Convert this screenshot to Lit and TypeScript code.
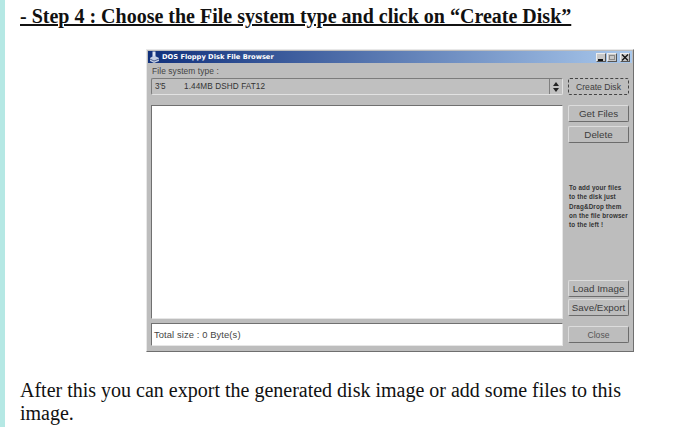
import { LitElement, html, css } from "lit";
import { customElement } from "lit/decorators.js";

@customElement("app-root")
export class AppRoot extends LitElement {
  static styles = css`
    :host { display: block; width: 679px; height: 427px; overflow: hidden; background: #fff; }
    .page { display: flex; height: 427px; }
    .strip { width: 5px; flex: none; background: #b5e8e4; }
    .doc { flex: 1; padding-left: 15px; font-family: "Liberation Serif", serif; color: #111; }
    h1 { margin: 0; padding-top: 4px; font-size: 20px; line-height: 24px; font-weight: bold; text-decoration: underline; text-decoration-thickness: 2px; white-space: nowrap; }
    p { margin: 27px 0 0; width: 610px; font-size: 20px; line-height: 23px; }
    .win { margin: 21px 0 0 126px; width: 488px; height: 303px; box-sizing: border-box; background: #bdbdbd; border: 1px solid; border-color: #e8e8e8 #6f6f6f #6f6f6f #e8e8e8; padding: 1px; display: flex; flex-direction: column; font-family: "Liberation Sans", sans-serif; color: #333; }
    .title { height: 12px; flex: none; display: flex; align-items: center; gap: 2px; padding: 0 2px 0 1px; background: linear-gradient(90deg, #10307c, #a9c8ec); color: #fff; font-size: 6.7px; font-weight: bold; font-family: "DejaVu Sans", sans-serif; }
    .title span { flex: 1; white-space: nowrap; }
    .ctl { width: 10px; height: 9px; box-sizing: border-box; background: #c8c8c8; border: 1px solid; border-color: #eee #555 #555 #eee; display: block; }
    .ctl svg { display: block; }
    .ctls { display: flex; gap: 1px; }
    .ctl.x { margin-left: 2px; }
    .body { flex: 1; display: grid; grid-template-columns: 412px 61px; column-gap: 5px; padding: 2px 3px 4px 3px; grid-template-rows: 13px 27px 1fr 27px; }
    .lbl { grid-column: 1 / 3; font-size: 8.4px; line-height: 13px; color: #444; letter-spacing: 0.1px; padding-left: 1px; }
    .combo { display: flex; align-items: center; box-sizing: border-box; height: 17px; background: #c0c0c0; border: 1px solid; border-color: #7c7c7c #e2e2e2 #e2e2e2 #7c7c7c; border-radius: 2px; font-size: 8.2px; padding-left: 3px; color: #333; }
    .combo .a { width: 29px; }
    .combo .b { flex: 1; letter-spacing: 0.1px; }
    .combo .arrow { width: 13px; height: 100%; box-sizing: border-box; border-left: 1px solid #808080; display: flex; align-items: center; justify-content: center; }
    .btn { box-sizing: border-box; width: 61px; height: 17px; display: flex; align-items: center; justify-content: center; background: #bdbdbd; border: 1px solid; border-color: #dcdcdc #6c6c6c #6c6c6c #dcdcdc; border-radius: 2px; font-size: 9.8px; color: #3c3c3c; white-space: nowrap; }
    .create { font-size: 8.6px; border: 1px dashed #444; }
    .list { background: #fff; border: 1px solid; border-color: #707070 #e6e6e6 #e6e6e6 #707070; }
    .side { display: flex; flex-direction: column; padding-bottom: 3px; }
    .top { display: flex; flex-direction: column; gap: 4px; }
    .bottom { display: flex; flex-direction: column; gap: 2px; }
    .help { flex: 1; font-size: 6.3px; line-height: 9.3px; font-weight: bold; color: #333; letter-spacing: 0.15px; padding: 40px 0 0 1px; white-space: nowrap; }
    .status { box-sizing: border-box; height: 23px; margin-top: 4px; background: #fff; border: 1px solid; border-color: #707070 #e6e6e6 #e6e6e6 #707070; display: flex; align-items: center; padding-left: 2px; font-size: 9.4px; color: #444; letter-spacing: 0.1px; }
    .close { margin-top: 7px; font-size: 8.6px; color: #555; }
  `;

  render() {
    return html`<div class="page">
      <div class="strip"></div>
      <div class="doc">
        <h1>- Step 4 : Choose the File system type and click on “Create Disk”</h1>
        <div class="win">
          <div class="title">
            <svg width="11" height="12" viewBox="0 0 11 12">
              <rect x="3.5" y="0.5" width="3" height="5" fill="#dfe6f2" />
              <path d="M1 7 L5 4.5 L10 7 L10 10 L5 12 L1 10 Z" fill="#c4cfe4" />
              <path d="M1 8 L5 10 L10 8" fill="none" stroke="#4a5f90" stroke-width="1" />
            </svg>
            <span>DOS Floppy Disk File Browser</span>
            <div class="ctls">
              <i class="ctl"><svg width="8" height="7"><rect x="1" y="5" width="5" height="2" fill="#111" /></svg></i>
              <i class="ctl"><svg width="8" height="7"><rect x="1.5" y="1.5" width="5" height="4" fill="none" stroke="#8a8a8a" /></svg></i>
              <i class="ctl x"><svg width="8" height="7"><path d="M1 0.5 L7 6.5 M7 0.5 L1 6.5" stroke="#111" stroke-width="1.3" /></svg></i>
            </div>
          </div>
          <div class="body">
            <div class="lbl">File system type :</div>
            <div class="combo">
              <span class="a">3'5</span><span class="b">1.44MB DSHD FAT12</span>
              <span class="arrow"><svg width="6" height="10" viewBox="0 0 6 10"><path d="M3 0 L6 4 L0 4 Z M3 10 L6 6 L0 6 Z" fill="#222" /></svg></span>
            </div>
            <div class="btn create">Create Disk</div>
            <div class="list"></div>
            <div class="side">
              <div class="top">
                <div class="btn">Get Files</div>
                <div class="btn">Delete</div>
              </div>
              <div class="help">To add your files<br />to the disk just<br />Drag&amp;Drop them<br />on the file browser<br />to the left !</div>
              <div class="bottom">
                <div class="btn">Load Image</div>
                <div class="btn">Save/Export</div>
              </div>
            </div>
            <div class="status">Total size : 0 Byte(s)</div>
            <div class="btn close">Close</div>
          </div>
        </div>
        <p>After this you can export the generated disk image or add some files to this image.</p>
      </div>
    </div>`;
  }
}
